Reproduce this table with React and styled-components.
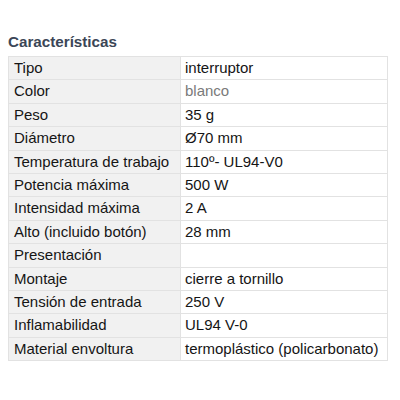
import React from "react";
import styled, { createGlobalStyle } from "styled-components";

const Global = createGlobalStyle`
  html, body { margin: 0; padding: 0; background: #fff; }
  body { font-family: "Liberation Sans", Arial, Helvetica, sans-serif; }
`;

const Page = styled.div`
  width: 400px;
  height: 400px;
  padding: 34px 12px 0 8px;
  box-sizing: border-box;
`;

const Title = styled.h3`
  margin: 0 0 6px 0;
  font-size: 15.2px;
  line-height: 16px;
  font-weight: bold;
  color: #3b4656;
`;

const Table = styled.table`
  width: 380px;
  border-collapse: collapse;
  font-size: 15px;
  color: #151515;
`;

const Row = styled.tr``;

const Label = styled.td`
  width: 162px;
  background: #f1f1f1;
  border: 1px solid #e2e2e2;
  padding: 2px 4px 2px 5px;
  line-height: 18.4px;
  white-space: nowrap;
`;

const Value = styled.td`
  background: #fff;
  border: 1px solid #e2e2e2;
  padding: 2px 4px 2px 4px;
  line-height: 18.4px;
  white-space: nowrap;
  color: ${(p) => (p.$muted ? "#7a7a7a" : "#151515")};
`;

const rows = [
  ["Tipo", "interruptor"],
  ["Color", "blanco", true],
  ["Peso", "35 g"],
  ["Diámetro", "Ø70 mm"],
  ["Temperatura de trabajo", "110º- UL94-V0"],
  ["Potencia máxima", "500 W"],
  ["Intensidad máxima", "2 A"],
  ["Alto (incluido botón)", "28 mm"],
  ["Presentación", ""],
  ["Montaje", "cierre a tornillo"],
  ["Tensión de entrada", "250 V"],
  ["Inflamabilidad", "UL94 V-0"],
  ["Material envoltura", "termoplástico (policarbonato)"],
];

export default function App() {
  return (
    <>
      <Global />
      <Page>
        <Title>Características</Title>
        <Table>
          <tbody>
            {rows.map(([k, v, muted]) => (
              <Row key={k}>
                <Label>{k}</Label>
                <Value $muted={muted}>{v}</Value>
              </Row>
            ))}
          </tbody>
        </Table>
      </Page>
    </>
  );
}
